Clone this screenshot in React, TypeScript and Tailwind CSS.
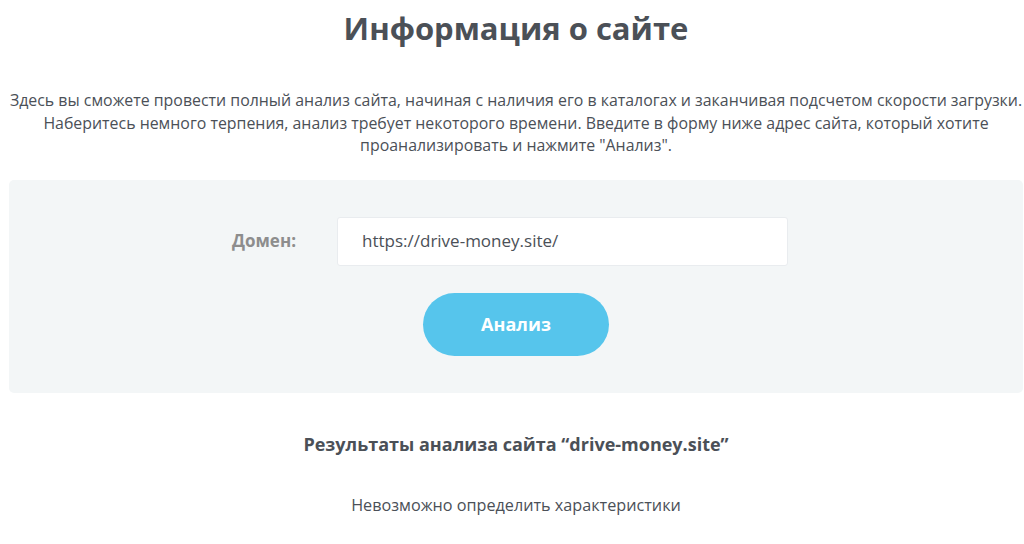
const App = () => {
  return (
    <div className="min-h-[544px] bg-white pl-[9px] pr-[1px] text-[#4b5057]" style={{ fontFamily: '"Open Sans", sans-serif' }}>
      <h1 className="pt-[9px] text-center text-[31px] font-bold leading-[38px] text-[#4b5057]">
        Информация о сайте
      </h1>

      <p className="mt-[42px] text-center text-[15.9px] leading-[22.5px] whitespace-nowrap text-[#4b5057]">
        Здесь вы сможете провести полный анализ сайта, начиная с наличия его в каталогах и заканчивая подсчетом скорости загрузки.
        <br />
        Наберитесь немного терпения, анализ требует некоторого времени. Введите в форму ниже адрес сайта, который хотите
        <br />
        проанализировать и нажмите "Анализ".
      </p>

      <div className="mt-[23px] flex h-[213px] flex-col items-center rounded-[5px] bg-[#f3f6f7] pt-[37px]">
        <div className="flex items-center pr-[12px]">
          <span className="w-[105px] text-[17px] font-bold text-[#8d8d8d]">Домен:</span>
          <div className="flex h-[49px] w-[451px] items-center rounded-[3px] border border-[#e9ecef] bg-white px-[24px] text-[17px] text-[#4b5057]">
            https://drive-money.site/
          </div>
        </div>
        <button className="mt-[27px] h-[63px] w-[186px] rounded-full bg-[#56c5ec] text-[18px] font-bold text-white">
          Анализ
        </button>
      </div>

      <h2 className="mt-[39px] text-center text-[18px] font-bold leading-[24px] text-[#4b5057]">
        Результаты анализа сайта “drive-money.site”
      </h2>

      <p className="mt-[38px] text-center text-[16.2px] leading-[22px] text-[#4b5057]">
        Невозможно определить характеристики
      </p>
    </div>
  );
};

export default App;
